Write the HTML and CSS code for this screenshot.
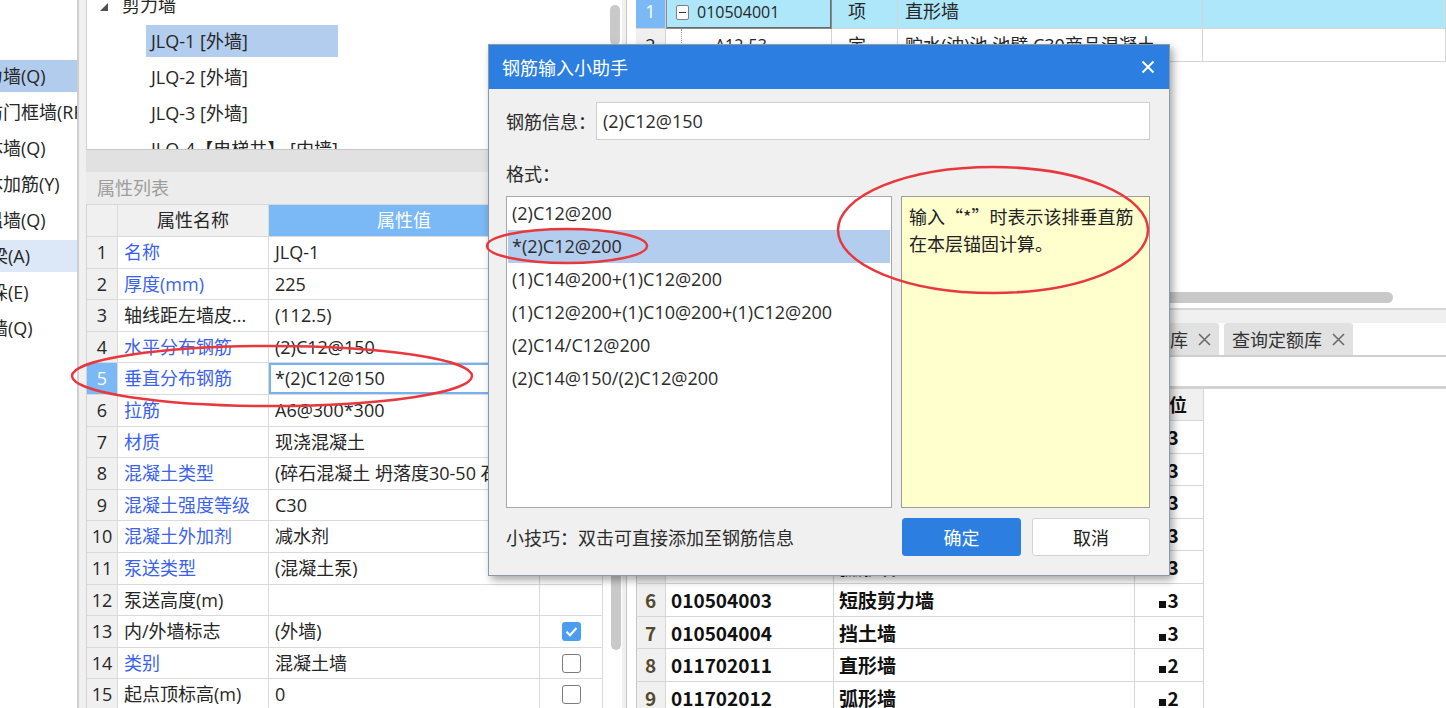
FILE: index.html
```html
<!DOCTYPE html>
<html lang="zh-CN">
<head>
    <meta charset="UTF-8">
    <title>钢筋输入小助手</title>
    <link rel="stylesheet" href="styles.css">
</head>
<body>
    <div class="app">
        <aside class="cats">
            <div class="cat sel">剪力墙(Q)</div>
            <div class="cat">人防门框墙(RF)</div>
            <div class="cat">砌体墙(Q)</div>
            <div class="cat">砌体加筋(Y)</div>
            <div class="cat">保温墙(Q)</div>
            <div class="cat short hover">暗梁(A)</div>
            <div class="cat short">墙垛(E)</div>
            <div class="cat short">幕墙(Q)</div>
        </aside>

        <section class="mid">
            <div class="tree">
                <div class="tree-list">
                    <div class="tree-row group">
                        <svg class="tri" width="8" height="8" viewBox="0 0 8 8"><polygon points="8,0 8,8 0,8" fill="#505050"/></svg>剪力墙
                    </div>
                    <div class="tree-row item sel">JLQ-1 [外墙]</div>
                    <div class="tree-row item">JLQ-2 [外墙]</div>
                    <div class="tree-row item">JLQ-3 [外墙]</div>
                    <div class="tree-row item">JLQ-4【电梯井】 [内墙]</div>
                </div>
                <div class="vscroll"><div class="thumb tree-thumb"></div></div>
            </div>
            <div class="splitter"></div>
            <div class="prop-title">属性列表</div>
            <div class="prop">
                <div class="ptable">
                    <div class="prow phead">
                        <div class="n"></div>
                        <div class="k">属性名称</div>
                        <div class="v">属性值</div>
                        <div class="c"></div>
                    </div>
                    <div class="prow"><div class="n">1</div><div class="k blue">名称</div><div class="v">JLQ-1</div><div class="c"></div></div>
                    <div class="prow"><div class="n">2</div><div class="k blue">厚度(mm)</div><div class="v">225</div><div class="c"></div></div>
                    <div class="prow"><div class="n">3</div><div class="k">轴线距左墙皮...</div><div class="v">(112.5)</div><div class="c"></div></div>
                    <div class="prow"><div class="n">4</div><div class="k blue">水平分布钢筋</div><div class="v">(2)C12@150</div><div class="c"></div></div>
                    <div class="prow cur"><div class="n">5</div><div class="k blue">垂直分布钢筋</div><div class="v">*(2)C12@150</div><div class="c"></div></div>
                    <div class="prow"><div class="n">6</div><div class="k blue">拉筋</div><div class="v">A6@300*300</div><div class="c"></div></div>
                    <div class="prow"><div class="n">7</div><div class="k blue">材质</div><div class="v">现浇混凝土</div><div class="c"></div></div>
                    <div class="prow"><div class="n">8</div><div class="k blue">混凝土类型</div><div class="v">(碎石混凝土 坍落度30-50 石子最大粒径40mm)</div><div class="c"></div></div>
                    <div class="prow"><div class="n">9</div><div class="k blue">混凝土强度等级</div><div class="v">C30</div><div class="c"></div></div>
                    <div class="prow"><div class="n">10</div><div class="k blue">混凝土外加剂</div><div class="v">减水剂</div><div class="c"></div></div>
                    <div class="prow"><div class="n">11</div><div class="k blue">泵送类型</div><div class="v">(混凝土泵)</div><div class="c"></div></div>
                    <div class="prow"><div class="n">12</div><div class="k">泵送高度(m)</div><div class="v"></div><div class="c"></div></div>
                    <div class="prow">
                        <div class="n">13</div><div class="k">内/外墙标志</div><div class="v">(外墙)</div>
                        <div class="c">
                            <svg width="19" height="19" viewBox="0 0 19 19"><rect width="19" height="19" rx="3" fill="#4c9df0"/><path d="M4.5 9.8 L8 13.2 L14.5 6" fill="none" stroke="#fff" stroke-width="2.2"/></svg>
                        </div>
                    </div>
                    <div class="prow"><div class="n">14</div><div class="k blue">类别</div><div class="v">混凝土墙</div><div class="c"><span class="box"></span></div></div>
                    <div class="prow"><div class="n">15</div><div class="k">起点顶标高(m)</div><div class="v">0</div><div class="c"><span class="box"></span></div></div>
                </div>
                <div class="pscroll"><div class="thumb prop-thumb"></div></div>
            </div>
        </section>

        <section class="right">
            <div class="top-grid">
                <div class="qrow cur">
                    <div class="n">1</div>
                    <div class="code"><span class="fold"></span><span class="code-txt">010504001</span></div>
                    <div class="t">项</div>
                    <div class="name">直形墙</div>
                    <div class="rest"></div>
                </div>
                <div class="qrow">
                    <div class="n">2</div>
                    <div class="code"><span class="tline"></span><span class="code-txt">A12-53</span></div>
                    <div class="t">定</div>
                    <div class="name">贮水(油)池 池壁 C30商品混凝土</div>
                    <div class="rest"></div>
                </div>
                <div class="hscroll"><div class="thumb"></div></div>
            </div>

            <div class="lower">
                <div class="lower-sep"></div>
                <div class="tabs">
                    <div class="tab">查询匹配清单<svg class="x" width="13" height="13" viewBox="0 0 13 13"><path d="M1 1 L12 12 M12 1 L1 12" stroke="#6a6a6a" stroke-width="1.6"/></svg></div>
                    <div class="tab">查询清单库<svg class="x" width="13" height="13" viewBox="0 0 13 13"><path d="M1 1 L12 12 M12 1 L1 12" stroke="#6a6a6a" stroke-width="1.6"/></svg></div>
                    <div class="tab">查询定额库<svg class="x" width="13" height="13" viewBox="0 0 13 13"><path d="M1 1 L12 12 M12 1 L1 12" stroke="#6a6a6a" stroke-width="1.6"/></svg></div>
                </div>
                <div class="toolbar"></div>
                <div class="bgrid">
                    <div class="brow bhead"><div class="n"></div><div>编码</div><div>名称</div><div class="u">单位</div></div>
                    <div class="brow"><div class="n">1</div><div>010502001</div><div>矩形柱</div><div class="u"><span class="sq"></span>3</div></div>
                    <div class="brow"><div class="n">2</div><div>010502003</div><div>异形柱</div><div class="u"><span class="sq"></span>3</div></div>
                    <div class="brow"><div class="n">3</div><div>010503002</div><div>矩形梁</div><div class="u"><span class="sq"></span>3</div></div>
                    <div class="brow"><div class="n">4</div><div>010504001</div><div>直形墙</div><div class="u"><span class="sq"></span>3</div></div>
                    <div class="brow"><div class="n">5</div><div>010504002</div><div>弧形墙</div><div class="u"><span class="sq"></span>3</div></div>
                    <div class="brow"><div class="n">6</div><div>010504003</div><div>短肢剪力墙</div><div class="u"><span class="sq"></span>3</div></div>
                    <div class="brow"><div class="n">7</div><div>010504004</div><div>挡土墙</div><div class="u"><span class="sq"></span>3</div></div>
                    <div class="brow"><div class="n">8</div><div>011702011</div><div>直形墙</div><div class="u"><span class="sq"></span>2</div></div>
                    <div class="brow"><div class="n">9</div><div>011702012</div><div>弧形墙</div><div class="u"><span class="sq"></span>2</div></div>
                </div>
            </div>
        </section>
    </div>

    <div class="dlg">
        <div class="dlg-title">
            <span>钢筋输入小助手</span>
            <svg width="14" height="14" viewBox="0 0 14 14"><path d="M1.5 1.5 L12.5 12.5 M12.5 1.5 L1.5 12.5" stroke="#fff" stroke-width="2"/></svg>
        </div>
        <div class="dlg-body">
            <div class="info-row">
                <label>钢筋信息：</label>
                <div class="input">(2)C12@150</div>
            </div>
            <div class="fmt-label">格式：</div>
            <div class="fmt-panels">
                <ul class="fmt-list">
                    <li>(2)C12@200</li>
                    <li class="sel">*(2)C12@200</li>
                    <li>(1)C14@200+(1)C12@200</li>
                    <li>(1)C12@200+(1)C10@200+(1)C12@200</li>
                    <li>(2)C14/C12@200</li>
                    <li>(2)C14@150/(2)C12@200</li>
                </ul>
                <div class="note">输入“*”时表示该排垂直筋<br>在本层锚固计算。</div>
            </div>
            <div class="dlg-foot">
                <span class="tip">小技巧：双击可直接添加至钢筋信息</span>
                <button class="btn ok">确定</button>
                <button class="btn cancel">取消</button>
            </div>
        </div>
    </div>

    <svg class="marks" width="1446" height="708" viewBox="0 0 1446 708">
        <ellipse cx="272" cy="376" rx="200" ry="30"/>
        <ellipse cx="567" cy="246" rx="80" ry="17"/>
        <ellipse cx="993" cy="230" rx="155" ry="63"/>
    </svg>
</body>
</html>
```

FILE: styles.css
```css
* {
    box-sizing: border-box;
}

html,
body {
    margin: 0;
    padding: 0;
}

body {
    width: 1446px;
    height: 708px;
    overflow: hidden;
    position: relative;
    font-family: "Open Sans", "Noto Sans CJK SC", sans-serif;
    font-size: 18px;
    color: #262626;
    background-color: #fff;
}

.app {
    display: flex;
    height: 708px;
}

/* left category list */
.cats {
    width: 79px;
    flex: none;
    padding-top: 60px;
    overflow: hidden;
    background-color: #fff;
    border-right: 2px solid #cfcfcf;
}

.cat {
    height: 32px;
    margin-bottom: 4px;
    line-height: 32px;
    white-space: nowrap;
    text-indent: -33px;
}

.cat.short {
    text-indent: -28px;
}

.cat.sel {
    background-color: #b2ccee;
}

.cat.hover {
    background-color: #dce8f8;
}

/* middle column: tree + properties */
.mid {
    width: 543px;
    flex: none;
    display: flex;
    flex-direction: column;
    padding-left: 7px;
    background-color: #f0f0f0;
}

.tree {
    height: 150px;
    flex: none;
    display: flex;
    background-color: #fff;
    border-left: 1px solid #d2d2d2;
    border-bottom: 1px solid #c6c6c6;
}

.tree-list {
    flex: 1;
    overflow: hidden;
}

.tree-row {
    height: 32px;
    margin-bottom: 4px;
    line-height: 32px;
    white-space: nowrap;
}

.tree-row.group {
    margin-top: -11px;
    padding-left: 13px;
}

.tri {
    margin-right: 14px;
    vertical-align: 1px;
}

.tree-row.item {
    width: 192px;
    margin-left: 59px;
    padding-left: 5px;
}

.tree-row.sel {
    background-color: #b3cdef;
}

.vscroll {
    width: 18px;
    flex: none;
}

.thumb {
    background-color: #c9c9c9;
    border-radius: 6px;
}

.tree-thumb {
    width: 10px;
    height: 40px;
    margin: 5px 0 0 6px;
}

.splitter {
    height: 22px;
    flex: none;
    background-color: #e1e1e1;
}

.prop-title {
    height: 33px;
    flex: none;
    padding-left: 11px;
    line-height: 32px;
    color: #9d9d9d;
    background-color: #ececec;
    border-bottom: 1px solid #d8d8d8;
}

.prop {
    flex: 1;
    display: flex;
    min-height: 0;
}

.ptable {
    width: 517px;
    flex: none;
    background-color: #fff;
    border-left: 1px solid #d2d2d2;
}

.prow {
    display: grid;
    grid-template-columns: 31px 151px 271px 63px;
    height: 31.6px;
}

.prow > div {
    padding: 0 6px;
    line-height: 30px;
    white-space: nowrap;
    overflow: hidden;
    border-right: 1px solid #dadada;
    border-bottom: 1px solid #dadada;
}

.prow .n {
    padding: 0;
    text-align: center;
    background-color: #f0f0f0;
}

.prow.phead {
    height: 32px;
}

.phead > div {
    text-align: center;
    background-color: #f0f0f0;
}

.phead .v {
    color: #fff;
    background-color: #7bb8f6;
}

.prow.cur .n {
    color: #fff;
    background-color: #7bb8f6;
}

.prow.cur .v {
    box-shadow: inset 0 0 0 2px #75b2f1;
}

.blue {
    color: #3b62ee;
}

.prow .c {
    display: flex;
    align-items: center;
    justify-content: center;
}

.box {
    width: 19px;
    height: 19px;
    background-color: #fff;
    border: 1.5px solid #7c7c7c;
    border-radius: 3px;
}

.pscroll {
    width: 19px;
    flex: none;
    background-color: #fff;
}

.prop-thumb {
    width: 10px;
    height: 230px;
    margin: 215px 0 0 8px;
}

/* right column */
.right {
    flex: 1;
    display: flex;
    flex-direction: column;
    padding-left: 4px;
    background-color: #f0f0f0;
}

.top-grid {
    height: 308px;
    flex: none;
    display: flex;
    flex-direction: column;
    padding-left: 9px;
    overflow: hidden;
    background-color: #fff;
    border-left: 1px solid #c6c6c6;
}

.qrow {
    display: grid;
    grid-template-columns: 30px 166px 66px 305px 1fr;
    height: 33px;
    flex: none;
    line-height: 32px;
}

.qrow > div {
    white-space: nowrap;
    overflow: hidden;
    border-right: 1px solid #d4d4d4;
    border-bottom: 1px solid #d4d4d4;
}

.qrow .n {
    text-align: center;
    background-color: #f0f0f0;
}

.qrow.cur {
    height: 34px;
    margin-top: -5px;
    background-color: #aee7fa;
}

.qrow.cur .n {
    color: #fff;
    background-color: #7bb8f6;
}

.qrow .code {
    display: flex;
    align-items: center;
    padding-left: 9px;
}

.qrow.cur .code {
    border: 1px solid #8c8c8c;
    box-shadow: inset -1px -1px 0 #6a6a6a;
}

.code-txt {
    font-size: 16px;
}

.fold {
    position: relative;
    width: 13px;
    height: 15px;
    margin-right: 8px;
    background-color: #fff;
    border: 1px solid #808080;
    border-radius: 2px;
}

.fold::after {
    content: "";
    position: absolute;
    left: 2px;
    right: 2px;
    top: 6px;
    height: 1px;
    background-color: #333;
}

.tline {
    width: 1px;
    height: 100%;
    margin: 0 33px 0 6px;
    border-left: 1px dotted #999;
}

.qrow .t {
    padding-left: 16px;
}

.qrow .name {
    padding-left: 7px;
}

.hscroll {
    margin-top: auto;
    padding: 0 53px 5px 20px;
}

.hscroll .thumb {
    height: 11px;
}

.lower {
    flex: 1;
    display: flex;
    flex-direction: column;
    background-color: #fff;
    border-left: 1px solid #c6c6c6;
}

.lower-sep {
    height: 15px;
    background-color: #f0f0f0;
    border-top: 2px solid #d6d6d6;
}

.tabs {
    height: 34px;
    display: flex;
    justify-content: flex-end;
    padding-right: 93px;
    border-bottom: 2px solid #cfcfcf;
}

.tab {
    display: flex;
    align-items: center;
    justify-content: space-between;
    margin-left: 5px;
    padding: 0 8px;
    color: #333;
    background-color: #e1e1e1;
    border-radius: 3px 3px 0 0;
}

.tab .x {
    margin-left: 10px;
}

.toolbar {
    height: 32px;
    border-bottom: 3px solid #d2d2d2;
}

.bgrid {
    padding-left: 9px;
}

.brow {
    display: grid;
    grid-template-columns: 30px 168px 301px 69px;
    height: 32.6px;
    font-family: "Noto Sans CJK SC", sans-serif;
    font-size: 19px;
    font-weight: bold;
    color: #111;
}

.brow > div {
    padding-left: 5px;
    line-height: 31px;
    white-space: nowrap;
    overflow: hidden;
    border-right: 1px solid #d6d6d6;
    border-bottom: 1px solid #d6d6d6;
}

.brow .n {
    padding: 0;
    text-align: center;
    color: #55492d;
    background-color: #f0f0f0;
    box-shadow: inset 1px 0 0 #c6c6c6;
}

.brow .u {
    padding: 0;
    text-align: center;
}

.brow.bhead {
    height: 32px;
    font-size: 18px;
}

.bhead > div {
    text-align: center;
    background-color: #f0f0f0;
}

.sq {
    display: inline-block;
    width: 7px;
    height: 7px;
    margin-right: 1px;
    background-color: #111;
}

/* dialog */
.dlg {
    position: absolute;
    left: 488px;
    top: 44px;
    width: 682px;
    height: 532px;
    z-index: 4;
    color: #2b2b2b;
    background-color: #f0f0f0;
    border: 1px solid #8d99a6;
    box-shadow: 3px 4px 8px rgba(0, 0, 0, 0.35);
}

.dlg-title {
    height: 44px;
    display: flex;
    align-items: center;
    justify-content: space-between;
    padding: 0 14px 0 13px;
    color: #fff;
    background-color: #2c7fe0;
}

.dlg-body {
    padding: 13px 19px 0 17px;
}

.info-row {
    display: flex;
    align-items: center;
    height: 38px;
}

.info-row label {
    width: 90px;
    flex: none;
}

.input {
    flex: 1;
    height: 38px;
    padding-left: 6px;
    line-height: 36px;
    background-color: #fff;
    border: 1px solid #cfcfcf;
}

.fmt-label {
    margin: 21px 0 9px;
    line-height: 26px;
}

.fmt-panels {
    display: flex;
    gap: 9px;
    height: 312px;
}

.fmt-list {
    width: 386px;
    flex: none;
    margin: 0;
    padding: 0 1px;
    list-style: none;
    background-color: #fff;
    border: 1px solid #a9a9a9;
}

.fmt-list li {
    height: 33px;
    padding-left: 4px;
    line-height: 33px;
    white-space: nowrap;
}

.fmt-list li.sel {
    background-color: #b2cdee;
}

.note {
    flex: 1;
    padding: 6px 7px;
    font-family: "Noto Sans CJK SC", sans-serif;
    line-height: 27px;
    color: #222;
    background-color: #fffecd;
    border: 1px solid #9d9d9d;
}

.dlg-foot {
    display: flex;
    align-items: center;
    height: 38px;
    margin-top: 10px;
}

.tip {
    flex: 1;
}

.btn {
    height: 38px;
    font-family: inherit;
    font-size: 18px;
    border-radius: 3px;
}

.btn.ok {
    width: 119px;
    color: #fff;
    background-color: #2c7fe0;
    border: 1px solid #2c7fe0;
}

.btn.cancel {
    width: 118px;
    margin-left: 11px;
    color: #222;
    background-color: #fff;
    border: 1px solid #d3d3d3;
}

/* red annotation rings */
.marks {
    position: absolute;
    left: 0;
    top: 0;
    z-index: 5;
    pointer-events: none;
}

.marks ellipse {
    fill: none;
    stroke: #e8383d;
    stroke-width: 2.5;
}
```
